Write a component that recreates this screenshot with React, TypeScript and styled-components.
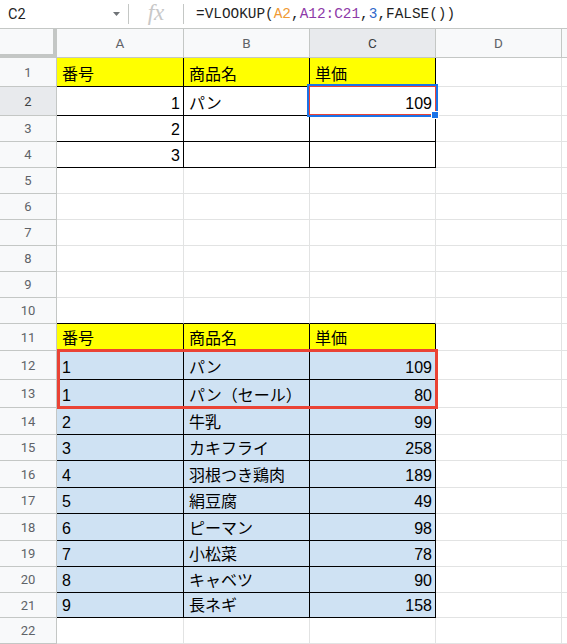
import React from 'react';
import styled, { createGlobalStyle } from 'styled-components';

const GlobalStyle = createGlobalStyle`
  html, body {
    margin: 0;
    padding: 0;
    background: #ffffff;
    overflow: hidden;
  }
  * {
    box-sizing: border-box;
  }
`;

const COL_WIDTHS = [57, 127, 126, 126, 126];
// column header row, then rows 1..22
const ROW_HEIGHTS = [
  29, 29, 29, 26, 26, 26, 26, 26, 26, 26, 26, 27, 29, 28, 27, 26, 27, 26, 27, 26, 26, 25, 26,
];
const LETTERS = ['A', 'B', 'C', 'D'];

const YELLOW = '#ffff00';
const BLUE = '#cfe2f3';

type Align = 'left' | 'right';

interface CellData {
  text?: string;
  align?: Align;
}

const header: CellData[] = [{ text: '番号' }, { text: '商品名' }, { text: '単価' }];

const items: [string, string, string][] = [
  ['1', 'パン', '109'],
  ['1', 'パン（セール）', '80'],
  ['2', '牛乳', '99'],
  ['3', 'カキフライ', '258'],
  ['4', '羽根つき鶏肉', '189'],
  ['5', '絹豆腐', '49'],
  ['6', 'ピーマン', '98'],
  ['7', '小松菜', '78'],
  ['8', 'キャベツ', '90'],
  ['9', '長ネギ', '158'],
];

// content of rows 1..22, columns A..C
const sheet: Record<number, CellData[]> = {
  1: header,
  2: [{ text: '1', align: 'right' }, { text: 'パン' }, { text: '109', align: 'right' }],
  3: [{ text: '2', align: 'right' }, {}, {}],
  4: [{ text: '3', align: 'right' }, {}, {}],
  11: header,
};
items.forEach((it, i) => {
  sheet[12 + i] = [{ text: it[0] }, { text: it[1] }, { text: it[2], align: 'right' }];
});

const inTop = (r: number) => r >= 1 && r <= 4;
const inBottom = (r: number) => r >= 11 && r <= 21;

const fillFor = (r: number) => {
  if (r === 1 || r === 11) return YELLOW;
  if (r >= 12 && r <= 21) return BLUE;
  return '#ffffff';
};

const Page = styled.div`
  width: 567px;
  height: 644px;
  overflow: hidden;
  background: #ffffff;
  font-family: Roboto, 'Liberation Sans', Arial, sans-serif;
`;

const FormulaBar = styled.div`
  display: flex;
  align-items: center;
  height: 29px;
  border-bottom: 1px solid #c4c7c5;
  background: #ffffff;
`;

const NameBox = styled.div`
  width: 128px;
  display: flex;
  align-items: center;
  justify-content: space-between;
  padding: 0 8px 0 8px;
  font-size: 14.5px;
  color: #1f1f1f;
`;

const Divider = styled.div`
  width: 1px;
  height: 20px;
  background: #c4c7c5;
`;

const FxSlot = styled.div`
  width: 54px;
  display: flex;
  justify-content: center;
  align-items: center;
  font-family: 'Liberation Serif', serif;
  font-style: italic;
  font-size: 23px;
  color: #c8c8c8;
  line-height: 1;
  padding-bottom: 3px;
`;

const Formula = styled.div`
  padding-left: 12px;
  font-family: 'Liberation Mono', 'DejaVu Sans Mono', monospace;
  font-size: 14.4px;
  color: #1f1f1f;
  white-space: nowrap;
`;

const Tok = styled.span<{ $color: string }>`
  color: ${(p) => p.$color};
`;

const Grid = styled.div`
  display: grid;
  grid-template-columns: ${COL_WIDTHS.map((w) => `${w}px`).join(' ')} 1fr;
  grid-template-rows: ${ROW_HEIGHTS.map((h) => `${h}px`).join(' ')};
`;

const Corner = styled.div`
  grid-row: 1;
  grid-column: 1;
  background: #f8f9fa;
  border-right: 4px solid #c4c7c5;
  border-bottom: 4px solid #c4c7c5;
`;

const ColHeader = styled.div<{ $c: number; $active?: boolean }>`
  grid-row: 1;
  grid-column: ${(p) => p.$c};
  display: flex;
  align-items: center;
  justify-content: center;
  background: ${(p) => (p.$active ? '#e8eaed' : '#f8f9fa')};
  border-right: 1px solid #c4c7c5;
  border-bottom: 1px solid #c4c7c5;
  font-size: 13.5px;
  color: ${(p) => (p.$active ? '#3c4043' : '#5f6368')};
`;

const RowHeader = styled.div<{ $r: number; $active?: boolean }>`
  grid-row: ${(p) => p.$r};
  grid-column: 1;
  display: flex;
  align-items: center;
  justify-content: center;
  background: ${(p) => (p.$active ? '#e8eaed' : '#f8f9fa')};
  border-right: 1px solid #c4c7c5;
  border-bottom: 1px solid #c4c7c5;
  font-size: 13px;
  color: ${(p) => (p.$active ? '#3c4043' : '#5f6368')};
`;

const Cell = styled.div<{
  $r: number;
  $c: number;
  $fill: string;
  $align: Align;
  $darkRight: boolean;
  $darkBottom: boolean;
}>`
  grid-row: ${(p) => p.$r};
  grid-column: ${(p) => p.$c};
  display: flex;
  align-items: flex-end;
  justify-content: ${(p) => (p.$align === 'right' ? 'flex-end' : 'flex-start')};
  padding: 0 3px 2px 5px;
  background: ${(p) => p.$fill};
  border-right: 1px solid ${(p) => (p.$darkRight ? '#000000' : '#e2e3e3')};
  border-bottom: 1px solid ${(p) => (p.$darkBottom ? '#000000' : '#e2e3e3')};
  font-family: 'Liberation Sans', Arial, 'Noto Sans CJK JP', sans-serif;
  font-size: 16px;
  line-height: 18px;
  color: #000000;
  white-space: nowrap;
  overflow: hidden;
`;

const ActiveCell = styled.div`
  grid-row: 3;
  grid-column: 4;
  margin: -3px -2px -1px -3px;
  border: 2px solid #1a73e8;
  box-shadow: inset 0 0 0 1px #ea4335;
  position: relative;
  pointer-events: none;
`;

const FillHandle = styled.div`
  position: absolute;
  right: -3px;
  bottom: -4px;
  width: 8px;
  height: 8px;
  background: #1a73e8;
  border: 1px solid #ffffff;
`;

const RangeHighlight = styled.div`
  grid-row: 13 / 15;
  grid-column: 2 / 5;
  margin: -2px -2px -1px 0;
  border: 3px solid #ea4335;
  pointer-events: none;
`;

const ROWS = ROW_HEIGHTS.length - 1;

export default function App() {
  const cells: React.ReactNode[] = [];
  for (let r = 1; r <= ROWS; r++) {
    const data = sheet[r] || [];
    for (let c = 0; c < 5; c++) {
      const tableCol = c < 3;
      const inTable = tableCol && (inTop(r) || inBottom(r));
      const d = tableCol ? data[c] || {} : {};
      cells.push(
        <Cell
          key={`${r}-${c}`}
          $r={r + 1}
          $c={c + 2}
          $fill={inTable ? fillFor(r) : '#ffffff'}
          $align={d.align || 'left'}
          $darkRight={inTable}
          $darkBottom={inTable || (tableCol && r === 10)}
        >
          {d.text}
        </Cell>
      );
    }
  }

  return (
    <Page>
      <GlobalStyle />
      <FormulaBar>
        <NameBox>
          <span>C2</span>
          <svg width="7" height="4" viewBox="0 0 7 4">
            <path d="M0 0 L7 0 L3.5 4 Z" fill="#6f7377" />
          </svg>
        </NameBox>
        <Divider />
        <FxSlot>fx</FxSlot>
        <Divider />
        <Formula>
          =VLOOKUP(<Tok $color="#f09a34">A2</Tok>,<Tok $color="#8e3aa8">A12:C21</Tok>,
          <Tok $color="#2f67c9">3</Tok>,FALSE())
        </Formula>
      </FormulaBar>
      <Grid>
        <Corner />
        {LETTERS.map((l, i) => (
          <ColHeader key={l} $c={i + 2} $active={l === 'C'}>
            {l}
          </ColHeader>
        ))}
        <ColHeader $c={6} />
        {Array.from({ length: ROWS }, (_, i) => (
          <RowHeader key={i} $r={i + 2} $active={i + 1 === 2}>
            {i + 1}
          </RowHeader>
        ))}
        {cells}
        {Array.from({ length: ROWS }, (_, i) => (
          <Cell
            key={`e-${i}`}
            $r={i + 2}
            $c={7}
            $fill="#ffffff"
            $align="left"
            $darkRight={false}
            $darkBottom={false}
          />
        ))}
        <RangeHighlight />
        <ActiveCell>
          <FillHandle />
        </ActiveCell>
      </Grid>
    </Page>
  );
}
